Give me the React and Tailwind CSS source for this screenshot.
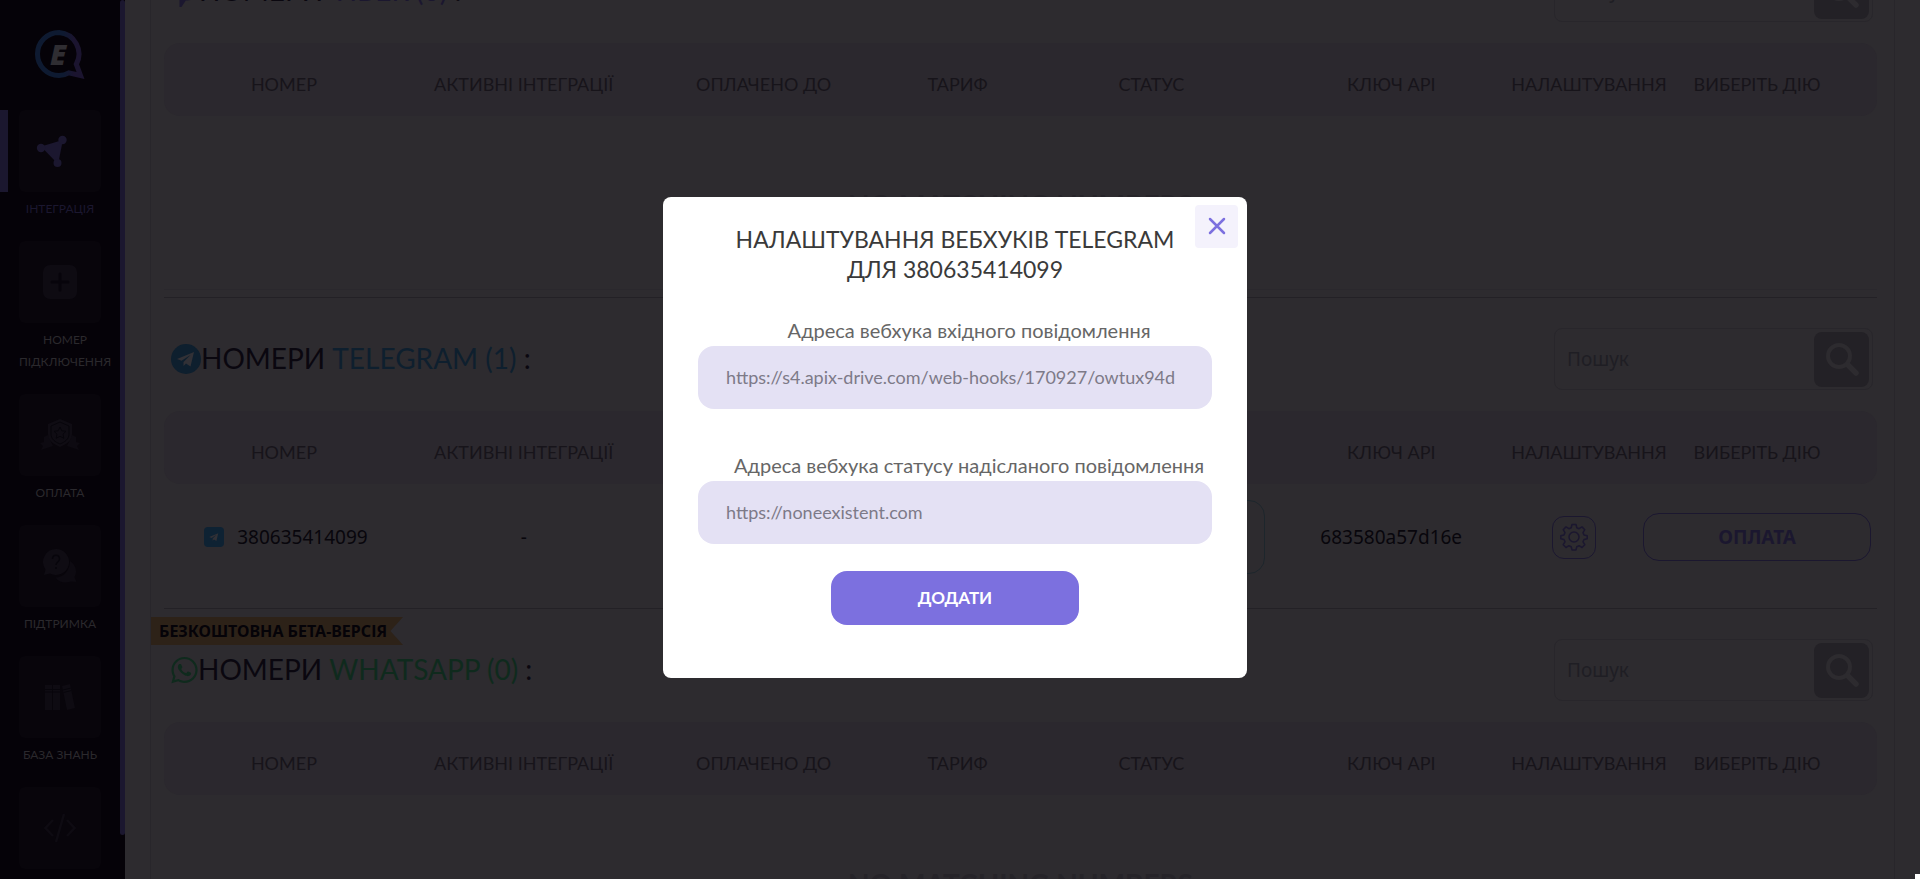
import React from "react";
import { FaWhatsapp } from "react-icons/fa";

const columns = [
  "НОМЕР",
  "АКТИВНІ ІНТЕГРАЦІЇ",
  "ОПЛАЧЕНО ДО",
  "ТАРИФ",
  "СТАТУС",
  "КЛЮЧ API",
  "НАЛАШТУВАННЯ",
  "ВИБЕРІТЬ ДІЮ",
];

function Logo() {
  return (
    <svg viewBox="0 0 50 50" className="h-[50px] w-[50px]" aria-hidden="true">
      <defs>
        <linearGradient id="ring" x1="0" y1="0" x2="1" y2="0">
          <stop offset="0.6" stopColor="#0e1a31" />
          <stop offset="0.85" stopColor="#1b142f" />
        </linearGradient>
      </defs>
      <path
        d="M24 2.5a21.5 21.5 0 1 0 0 43c3.500 0 7-1 9.800-2.600L45.500 45.500l-4.200-11.300A21.500 21.500 0 0 0 24 2.500z"
        fill="none"
        stroke="url(#ring)"
        strokeWidth="5"
      />
      <text x="15" y="35" fill="#2f2d32" fontSize="29" fontStyle="italic" fontWeight="800" fontFamily="Open Sans, sans-serif">
        E
      </text>
    </svg>
  );
}

function ShareIcon() {
  return (
    <svg viewBox="0 0 32 32" className="-ml-4 h-8 w-8" fill="#1b172f" aria-hidden="true">
      <path d="M5 11.500L25 5.500l1.500 1.500L22.500 27l-2 .5z" />
      <circle cx="5" cy="13" r="4.200" />
      <circle cx="26.500" cy="5" r="4.200" />
      <circle cx="21.500" cy="28" r="4" />
    </svg>
  );
}

function PlusIcon() {
  return (
    <svg viewBox="0 0 34 34" className="h-[34px] w-[34px]" aria-hidden="true">
      <rect width="34" height="34" rx="7" fill="#0e0b12" />
      <path d="M17 9v16M9 17h16" stroke="#07040b" strokeWidth="3" strokeLinecap="round" />
    </svg>
  );
}

function ShieldIcon() {
  return (
    <svg viewBox="0 0 40 32" className="h-8 w-10" aria-hidden="true">
      <path d="M8 16l-4 2v5l-4 1 3 3-2 4 12-4zM32 16l4 2v5l4 1-3 3 2 4-12-4z" fill="#0d0a11" />
      <path d="M20 0l12 5v10c0 6-5 10-12 13C13 25 8 21 8 15V5z" fill="#0f0c13" />
      <path
        d="M20 3l9 4v8c0 5-4 8-9 10-5-2-9-5-9-10V7zM20 8l1.800 3.800 4.200.5-3 2.900.8 4.100-3.800-2-3.800 2 .8-4.100-3-2.900 4.200-.5z"
        fill="none"
        stroke="#07050b"
        strokeWidth="1"
      />
    </svg>
  );
}

function ChatIcon() {
  return (
    <svg viewBox="0 0 34 34" className="h-[34px] w-[34px]" aria-hidden="true">
      <path d="M27 12c5 3 8 10 4.500 16l2 5-6-.5c-5 2-12 1-15-4C20 28.500 27 22 27 12z" fill="#0d0a11" />
      <path d="M13 0a13 13 0 1 1-6 24.500L1 26l1.500-5.500A13 13 0 0 1 13 0z" fill="#0f0c13" />
      <path d="M9.500 10c0-5 7-5 7 0 0 3-3.500 3-3.500 6M13 18v2" fill="none" stroke="#07050b" strokeWidth="1.500" />
    </svg>
  );
}

function BooksIcon() {
  return (
    <svg viewBox="0 0 30 26" className="h-[26px] w-[30px]" aria-hidden="true">
      <path d="M0 1h7v25H0zM8 1h7v25H8zM17 2l8-2 5 24-8 2z" fill="#0e0b12" />
      <path d="M0 5.500h15M0 8h15M18 6l8-2M18.500 8.500l8-2" stroke="#07050b" strokeWidth="1" />
    </svg>
  );
}

function CodeIcon() {
  return (
    <svg viewBox="0 0 32 30" className="h-[30px] w-8" fill="none" stroke="#0e0b12" strokeWidth="2.500" aria-hidden="true">
      <path d="M9 7L1.500 15 9 23M23 7l7.500 8L23 23M20 1l-8 28" />
    </svg>
  );
}

const menu = [
  { label: "ІНТЕГРАЦІЯ", icon: <ShareIcon />, active: true },
  { label: "НОМЕР ПІДКЛЮЧЕННЯ", icon: <PlusIcon /> },
  { label: "ОПЛАТА", icon: <ShieldIcon /> },
  { label: "ПІДТРИМКА", icon: <ChatIcon /> },
  { label: "БАЗА ЗНАНЬ", icon: <BooksIcon /> },
  { icon: <CodeIcon /> },
];

function Sidebar() {
  return (
    <aside className="flex h-full w-[125px] shrink-0 overflow-hidden bg-[#050208]">
      <nav className="flex w-[120px] shrink-0 flex-col">
        <a href="#" aria-label="E" className="mt-[30px] mb-[30px] ml-[35px]">
          <Logo />
        </a>
        {menu.map((item, i) => (
          <a
            key={i}
            href="#"
            className={
              item.active
                ? "mb-[21px] block text-[#1b172f]"
                : "mb-[21px] block text-[#2b292d]"
            }
          >
            <span className="flex">
              <span className={item.active ? "mr-[11px] h-[82px] w-2 bg-[#1b172f]" : "w-[19px]"} />
              <span className="flex h-[82px] w-[82px] items-center justify-center rounded-md bg-[#08050b]">
                {item.icon}
              </span>
            </span>
            {item.label && (
              <span className="mt-[6px] ml-[19px] block w-min min-w-[82px] text-center text-[12px] leading-[22px]">
                {item.label}
              </span>
            )}
          </a>
        ))}
      </nav>
      <div className="h-full w-[5px] shrink-0">
        <div className="h-[95%] rounded-full bg-[#1b172f]" />
      </div>
    </aside>
  );
}

function ViberIcon() {
  return (
    <svg viewBox="0 0 28 32" className="h-8 w-7" fill="none" stroke="#1b172f" strokeWidth="3" aria-hidden="true">
      <path d="M14 2c9 0 12 3 12 11s-3 11-12 11l-4 6v-6.500C4 22.500 2 19 2 13 2 5 5 2 14 2z" />
    </svg>
  );
}

function TelegramPlane(props) {
  return (
    <svg viewBox="0 0 30 30" aria-hidden="true" {...props}>
      <path d="M23 8L6 15l4.500 1.700L19.500 11l-7 7v4l2.500-2.500 4.500 3z" fill="#323136" />
    </svg>
  );
}

function SearchBox({ id }) {
  return (
    <form
      className="flex h-[62px] w-[319px] items-center rounded-lg border border-[#28262b] pr-[3px]"
      onSubmit={(e) => e.preventDefault()}
    >
      <label htmlFor={id} className="sr-only">
        Пошук
      </label>
      <input
        id={id}
        placeholder="Пошук"
        className="min-w-0 flex-1 bg-transparent pl-3 font-['Noto_Sans',sans-serif] text-[19px] text-[#1f1e24] outline-none placeholder:text-[#1f1e24]"
      />
      <button
        type="submit"
        aria-label="Пошук"
        className="flex h-[55px] w-[55px] items-center justify-center rounded-lg bg-[#232126]"
      >
        <svg viewBox="0 0 34 34" className="h-[34px] w-[34px]" fill="none" stroke="#2d2b2f" aria-hidden="true">
          <circle cx="14" cy="14" r="11" strokeWidth="4" />
          <path d="M23 23l8 8" strokeWidth="5.500" strokeLinecap="round" />
        </svg>
      </button>
    </form>
  );
}

function Section({ id, icon, name, nameClass, badge, children }) {
  return (
    <section className="relative border-b border-[#232126] pt-[30px]">
      {badge && (
        <div className="absolute top-2 -left-[13px] h-7 w-[252px] bg-[#2d2218] pl-2 font-['Noto_Sans',sans-serif] text-[16px] leading-7 font-bold whitespace-nowrap text-[#050308] [clip-path:polygon(0_0,100%_0,95%_50%,100%_100%,0_100%)]">
          {badge}
        </div>
      )}
      <div className="flex items-center justify-between pr-1 pl-[7px]">
        <h2 className="flex items-center text-[28px] leading-9 whitespace-pre text-[#0a070f]">
          {icon}
          <span className="pb-0.5">
            НОМЕРИ <span className={nameClass}>{name}</span> :
          </span>
        </h2>
        <SearchBox id={id} />
      </div>
      <table className="mt-[21px] w-full table-fixed border-separate border-spacing-0 text-center">
        <colgroup>
          <col />
          <col />
          <col />
          <col className="w-[148px]" />
          <col />
          <col />
          <col className="w-[126px]" />
          <col />
        </colgroup>
        <thead>
          <tr className="h-[73px]">
            {columns.map((c) => (
              <th
                key={c}
                className="bg-[#2b282e] p-0 pt-2 text-[18px] leading-6 font-normal whitespace-nowrap text-[#17141a] first:rounded-l-2xl last:rounded-r-2xl"
              >
                {c}
              </th>
            ))}
          </tr>
        </thead>
        {children}
      </table>
    </section>
  );
}

function EmptyBody() {
  return (
    <tbody>
      <tr>
        <td colSpan={8} className="h-[174px] border-b border-[#2a282d] p-0 pt-[71px] align-top text-[28px] leading-9 font-bold text-[#262429]">
          NO MATCHING NUMBERS
        </td>
      </tr>
      <tr>
        <td colSpan={8} className="h-[7px] p-0" />
      </tr>
    </tbody>
  );
}

function GearIcon() {
  return (
    <svg viewBox="0 0 28 28" className="h-7 w-7" fill="none" stroke="#1b172f" strokeWidth="1.500" strokeLinejoin="round" aria-hidden="true">
      <path d="M12 1.500h4l.8 3.200 2.300 1 2.900-1.800 2.800 2.800-1.800 2.900 1 2.300 3.200.8v3l-3.200.8-1 2.300 1.800 2.900-2.800 2.800-2.900-1.800-2.300 1-.8 3.200h-4l-.8-3.200-2.300-1L6 24.500l-2.800-2.800L5 18.800l-1-2.300-3.200-.8v-3L4 11.900l1-2.300-1.800-2.900L6 3.900l2.900 1.800 2.300-1z" />
      <circle cx="14" cy="14" r="5" />
    </svg>
  );
}

function Modal() {
  return (
    <div className="fixed inset-0 flex items-center justify-center pr-[10px] pb-[5px]">
      <div
        role="dialog"
        aria-modal="true"
        aria-labelledby="dialog-title"
        className="relative flex w-[584px] flex-col rounded-lg bg-white px-[35px] pt-[27px] pb-[53px]"
      >
        <button
          aria-label="Закрити"
          className="absolute top-2 right-[9px] flex h-[43px] w-[43px] items-center justify-center rounded-sm bg-[#f4f2fc]"
        >
          <svg viewBox="0 0 18 18" className="h-[18px] w-[18px]" stroke="#7c70df" strokeWidth="2.500" strokeLinecap="round" aria-hidden="true">
            <path d="M2 2l14 14M16 2L2 16" />
          </svg>
        </button>
        <h1 id="dialog-title" className="px-6 text-center text-[23px] leading-[30px] text-[#3a3a3a]">
          НАЛАШТУВАННЯ ВЕБХУКІВ TELEGRAM ДЛЯ 380635414099
        </h1>
        <label htmlFor="incoming" className="mt-[31px] -mr-2 pb-px pl-5 text-center text-[20px] leading-[30px] whitespace-nowrap text-[#666]">
          Адреса вебхука вхідного повідомлення
        </label>
        <input
          id="incoming"
          defaultValue="https://s4.apix-drive.com/web-hooks/170927/owtux94d"
          className="h-[63px] w-full rounded-2xl bg-[#e4e1f4] px-7 text-[18px] text-[#7d7a88] outline-none"
        />
        <label htmlFor="status" className="mt-[41px] -mr-2 pb-px pl-5 text-center text-[20px] leading-[30px] whitespace-nowrap text-[#666]">
          Адреса вебхука статусу надісланого повідомлення
        </label>
        <input
          id="status"
          defaultValue="https://noneexistent.com"
          className="h-[63px] w-full rounded-2xl bg-[#e4e1f4] px-7 text-[18px] text-[#7d7a88] outline-none"
        />
        <button className="mt-[27px] h-[54px] w-[248px] self-center rounded-2xl bg-[#7c70df] text-[17px] font-bold text-white">
          ДОДАТИ
        </button>
      </div>
    </div>
  );
}

export default function App() {
  return (
    <div className="flex h-screen overflow-hidden bg-[#2d2b2f] font-['Lato',sans-serif]">
      <Sidebar />
      <main className="h-full min-w-0 flex-1 overflow-hidden pr-[25px] pl-[25px]">
        <div className="-mt-[70px] border-x border-[#28262b] pr-[17px] pl-[13px]">
          <Section id="search-viber" icon={<ViberIcon />} name="VIBER (0)" nameClass="text-[#1b172f]">
            <EmptyBody />
          </Section>
          <Section
            id="search-telegram"
            icon={
              <span className="flex h-[30px] w-[30px] items-center justify-center rounded-full bg-[#0e1f2e]">
                <TelegramPlane className="h-[30px] w-[30px]" />
              </span>
            }
            name="TELEGRAM (1)"
            nameClass="text-[#0e1f2e]"
          >
            <tbody className="font-['Noto_Sans',sans-serif] text-[19px] text-[#08060c]">
              <tr className="h-[106px]">
                <td className="p-0">
                  <span className="flex items-center justify-center gap-[13px] pl-1">
                    <span className="flex h-5 w-5 items-center justify-center rounded-sm bg-[#0e2233]">
                      <TelegramPlane className="h-4 w-4" />
                    </span>
                    380635414099
                  </span>
                </td>
                <td className="p-0">-</td>
                <td />
                <td />
                <td className="p-0">
                  <div className="mx-auto h-[74px] w-[228px] rounded-2xl border border-[#1d262c]" />
                </td>
                <td className="p-0">683580a57d16e</td>
                <td className="p-0">
                  <button aria-label="Налаштування" className="mx-auto flex h-[43px] w-11 items-center justify-center rounded-xl border border-[#1b172f]">
                    <GearIcon />
                  </button>
                </td>
                <td className="p-0">
                  <button className="h-12 w-[228px] rounded-2xl border border-[#1b172f] font-bold text-[#1b172f]">
                    ОПЛАТА
                  </button>
                </td>
              </tr>
              <tr>
                <td colSpan={8} className="h-[18px] p-0" />
              </tr>
            </tbody>
          </Section>
          <Section
            id="search-whatsapp"
            icon={<FaWhatsapp className="h-[30px] w-[27px] text-[#0f2a1d]" aria-hidden="true" />}
            name="WHATSAPP (0)"
            nameClass="text-[#0f2a1d]"
            badge="БЕЗКОШТОВНА БЕТА-ВЕРСІЯ"
          >
            <EmptyBody />
          </Section>
        </div>
      </main>
      <Modal />
      <div className="fixed right-0 bottom-0 h-[5px] w-[5px] bg-white" />
    </div>
  );
}
